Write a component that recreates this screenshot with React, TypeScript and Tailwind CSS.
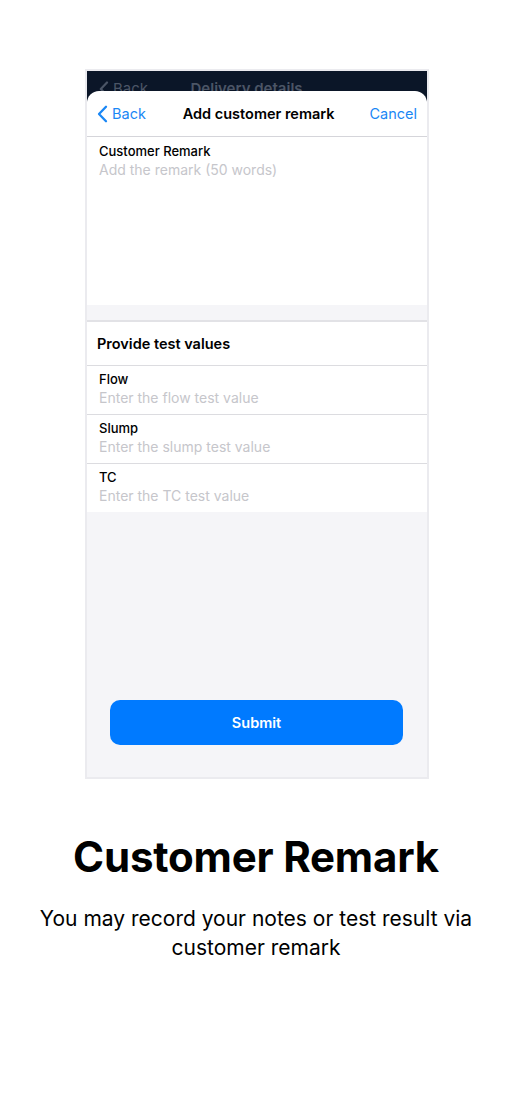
import * as React from 'react';

const font = { fontFamily: 'Inter, "Noto Sans", sans-serif' };

function Field({ label, placeholder, last }: { label: string; placeholder: string; last?: boolean }) {
  return (
    <div className={`bg-white pl-[12px] pt-[4px] pb-[6px] ${last ? '' : 'border-b border-[#dcdce0]'}`}>
      <div className="text-[13px] leading-[18px] font-medium text-black">{label}</div>
      <div className="text-[14px] leading-[20px] text-[#c6c6cb]">{placeholder}</div>
    </div>
  );
}

export default function App() {
  return (
    <div className="w-full min-h-[1108px] bg-white flex flex-col items-center pt-[69px]" style={font}>
      {/* phone screenshot */}
      <div className="w-[344px] h-[710px] border-2 border-[#ebebef] bg-[#f5f5f8] flex flex-col overflow-hidden ml-[2px]">
        <div className="h-[31px] bg-[#0b1628] flex items-start justify-between px-[12px] pt-[9px] shrink-0">
          <div className="flex items-center gap-[4px] text-[#4b5566] text-[15px] leading-[18px]">
            <svg width="10" height="16" viewBox="0 0 10 16" fill="none">
              <path d="M8 1.5 1.8 8 8 14.5" stroke="#4b5566" strokeWidth="2.2" strokeLinecap="round" strokeLinejoin="round" />
            </svg>
            <span>Back</span>
          </div>
          <div className="text-[#4b5566] text-[15px] leading-[18px] font-semibold -ml-[10px]">Delivery details</div>
          <div className="w-[60px]" />
        </div>

        <div className="relative -mt-[11px] bg-white rounded-t-[12px] flex flex-col">
          {/* nav */}
          <div className="h-[46px] flex items-center justify-between pl-[10px] pr-[10px] border-b border-[#d5d5da]">
            <div className="flex items-center gap-[4px] text-[#1a87f5] text-[14.5px]">
              <svg width="11" height="18" viewBox="0 0 11 18" fill="none">
                <path d="M9 1.8 2 9l7 7.2" stroke="#1a87f5" strokeWidth="2.3" strokeLinecap="round" strokeLinejoin="round" />
              </svg>
              <span>Back</span>
            </div>
            <div className="text-[14.5px] font-semibold text-black ml-[2px]">Add customer remark</div>
            <div className="text-[14.5px] text-[#1a87f5]">Cancel</div>
          </div>

          {/* remark */}
          <div className="h-[168px] pl-[12px] pt-[5px]">
            <div className="text-[13px] leading-[18px] font-medium text-black">Customer Remark</div>
            <div className="text-[14px] leading-[20px] text-[#c6c6cb]">Add the remark (50 words)</div>
          </div>
        </div>

        <div className="h-[17px] bg-[#f5f5f8] border-b-2 border-[#e2e2e6]" />

        <div className="h-[44px] bg-white flex items-center pl-[10px] border-b border-[#dcdce0]">
          <span className="text-[14.5px] font-semibold text-black">Provide test values</span>
        </div>
        <Field label="Flow" placeholder="Enter the flow test value" />
        <Field label="Slump" placeholder="Enter the slump test value" />
        <Field label="TC" placeholder="Enter the TC test value" last />

        <div className="flex-1 flex flex-col justify-end pl-[23px] pr-[24px] pb-[32px]">
          <button className="h-[45px] w-full rounded-[10px] bg-[#007aff] text-white text-[14.5px] font-semibold">
            Submit
          </button>
        </div>
      </div>

      <h1 className="mt-[53px] text-[42px] leading-[50px] font-bold text-black tracking-[-0.2px]">Customer Remark</h1>
      <p className="mt-[22px] w-[470px] text-center text-[21px] leading-[29px] text-black">
        You may record your notes or test result via customer remark
      </p>
    </div>
  );
}
